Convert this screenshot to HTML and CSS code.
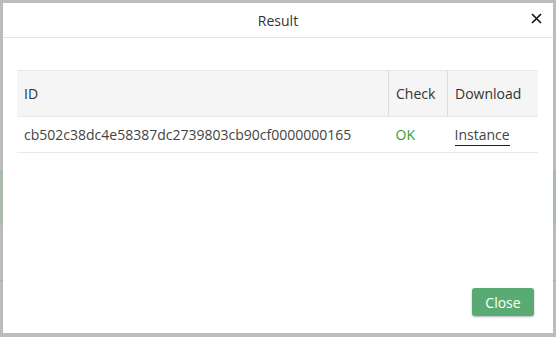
FILE: index.html
```html
<!DOCTYPE html>
<html lang="en">
<head>
    <meta charset="UTF-8">
    <title>Result</title>
    <link rel="stylesheet" href="styles.css">
</head>
<body>
    <!-- 背景のページ -->
    <div class="backdrop">
        <div class="back-band"></div>
        <div class="back-line"></div>
    </div>

    <!-- ダイアログ -->
    <div class="modal">
        <div class="modal-header">
            <span class="modal-title">Result</span>
            <svg class="modal-close" width="11" height="11" viewBox="0 0 11 11">
                <path d="M1 1 L10 10 M10 1 L1 10" stroke="#111" stroke-width="1.6" fill="none"/>
            </svg>
        </div>
        <div class="modal-body">
            <table class="result-table">
                <thead>
                    <tr>
                        <th class="col-id">ID</th>
                        <th class="col-check">Check</th>
                        <th class="col-download">Download</th>
                    </tr>
                </thead>
                <tbody>
                    <tr>
                        <td>cb502c38dc4e58387dc2739803cb90cf0000000165</td>
                        <td class="ok">OK</td>
                        <td><a class="dl-link" href="#">Instance</a></td>
                    </tr>
                </tbody>
            </table>
        </div>
        <div class="modal-footer">
            <button class="btn-close">Close</button>
        </div>
    </div>
</body>
</html>
```

FILE: styles.css
```css
html, body {
    margin: 0;
    padding: 0;
    height: 100%;
}
body {
    background-color: #bcbcbc;
    font-family: "Open Sans", "Noto Sans", sans-serif;
    color: #333;
    padding: 3px 3px 4px 3px;
    box-sizing: border-box;
    position: relative;
    overflow: hidden;
}
.backdrop {
    position: absolute;
    inset: 0;
}
.back-band {
    position: absolute;
    left: 0;
    right: 0;
    top: 170px;
    height: 55px;
    background-color: #a9bcac;
}
.back-line {
    position: absolute;
    left: 0;
    right: 0;
    top: 280px;
    height: 1px;
    background-color: #aeaeae;
}
.modal {
    position: relative;
    height: 330px;
    background-color: #fff;
    display: flex;
    flex-direction: column;
}
.modal-header {
    height: 34px;
    border-bottom: 1px solid #e5e5e5;
    display: flex;
    align-items: center;
    justify-content: center;
    position: relative;
}
.modal-title {
    font-size: 14px;
    color: #333;
}
.modal-close {
    position: absolute;
    right: 11px;
    top: 10px;
}
.modal-body {
    flex: 1;
    padding: 32px 15px 0 14px;
}
.result-table {
    width: 100%;
    border-collapse: collapse;
    font-size: 14px;
}
.result-table th {
    height: 45px;
    background-color: #f5f5f5;
    font-weight: normal;
    text-align: left;
    padding: 0 7px;
    border-top: 1px solid #e8e8e8;
    border-bottom: 1px solid #e8e8e8;
    color: #333;
}
.result-table th + th {
    border-left: 1px solid #dcdcdc;
}
.result-table td {
    height: 35px;
    padding: 0 7px;
    border-bottom: 1px solid #e8e8e8;
    color: #444;
}
.col-check {
    width: 44px;
}
.col-download {
    width: 76px;
}
.ok {
    color: #3a9a3a !important;
}
.dl-link {
    color: #444;
    text-decoration: none;
    border-bottom: 1px solid #222;
    padding-bottom: 1px;
}
.modal-footer {
    display: flex;
    justify-content: flex-end;
    padding: 0 19px 17px 0;
}
.btn-close {
    width: 62px;
    height: 28px;
    background-color: #5aab73;
    color: #fff;
    border: none;
    border-radius: 3px;
    font-family: "Open Sans", "Noto Sans", sans-serif;
    font-size: 14px;
    box-shadow: 0 1px 2px rgba(0, 0, 0, 0.3);
}
```
